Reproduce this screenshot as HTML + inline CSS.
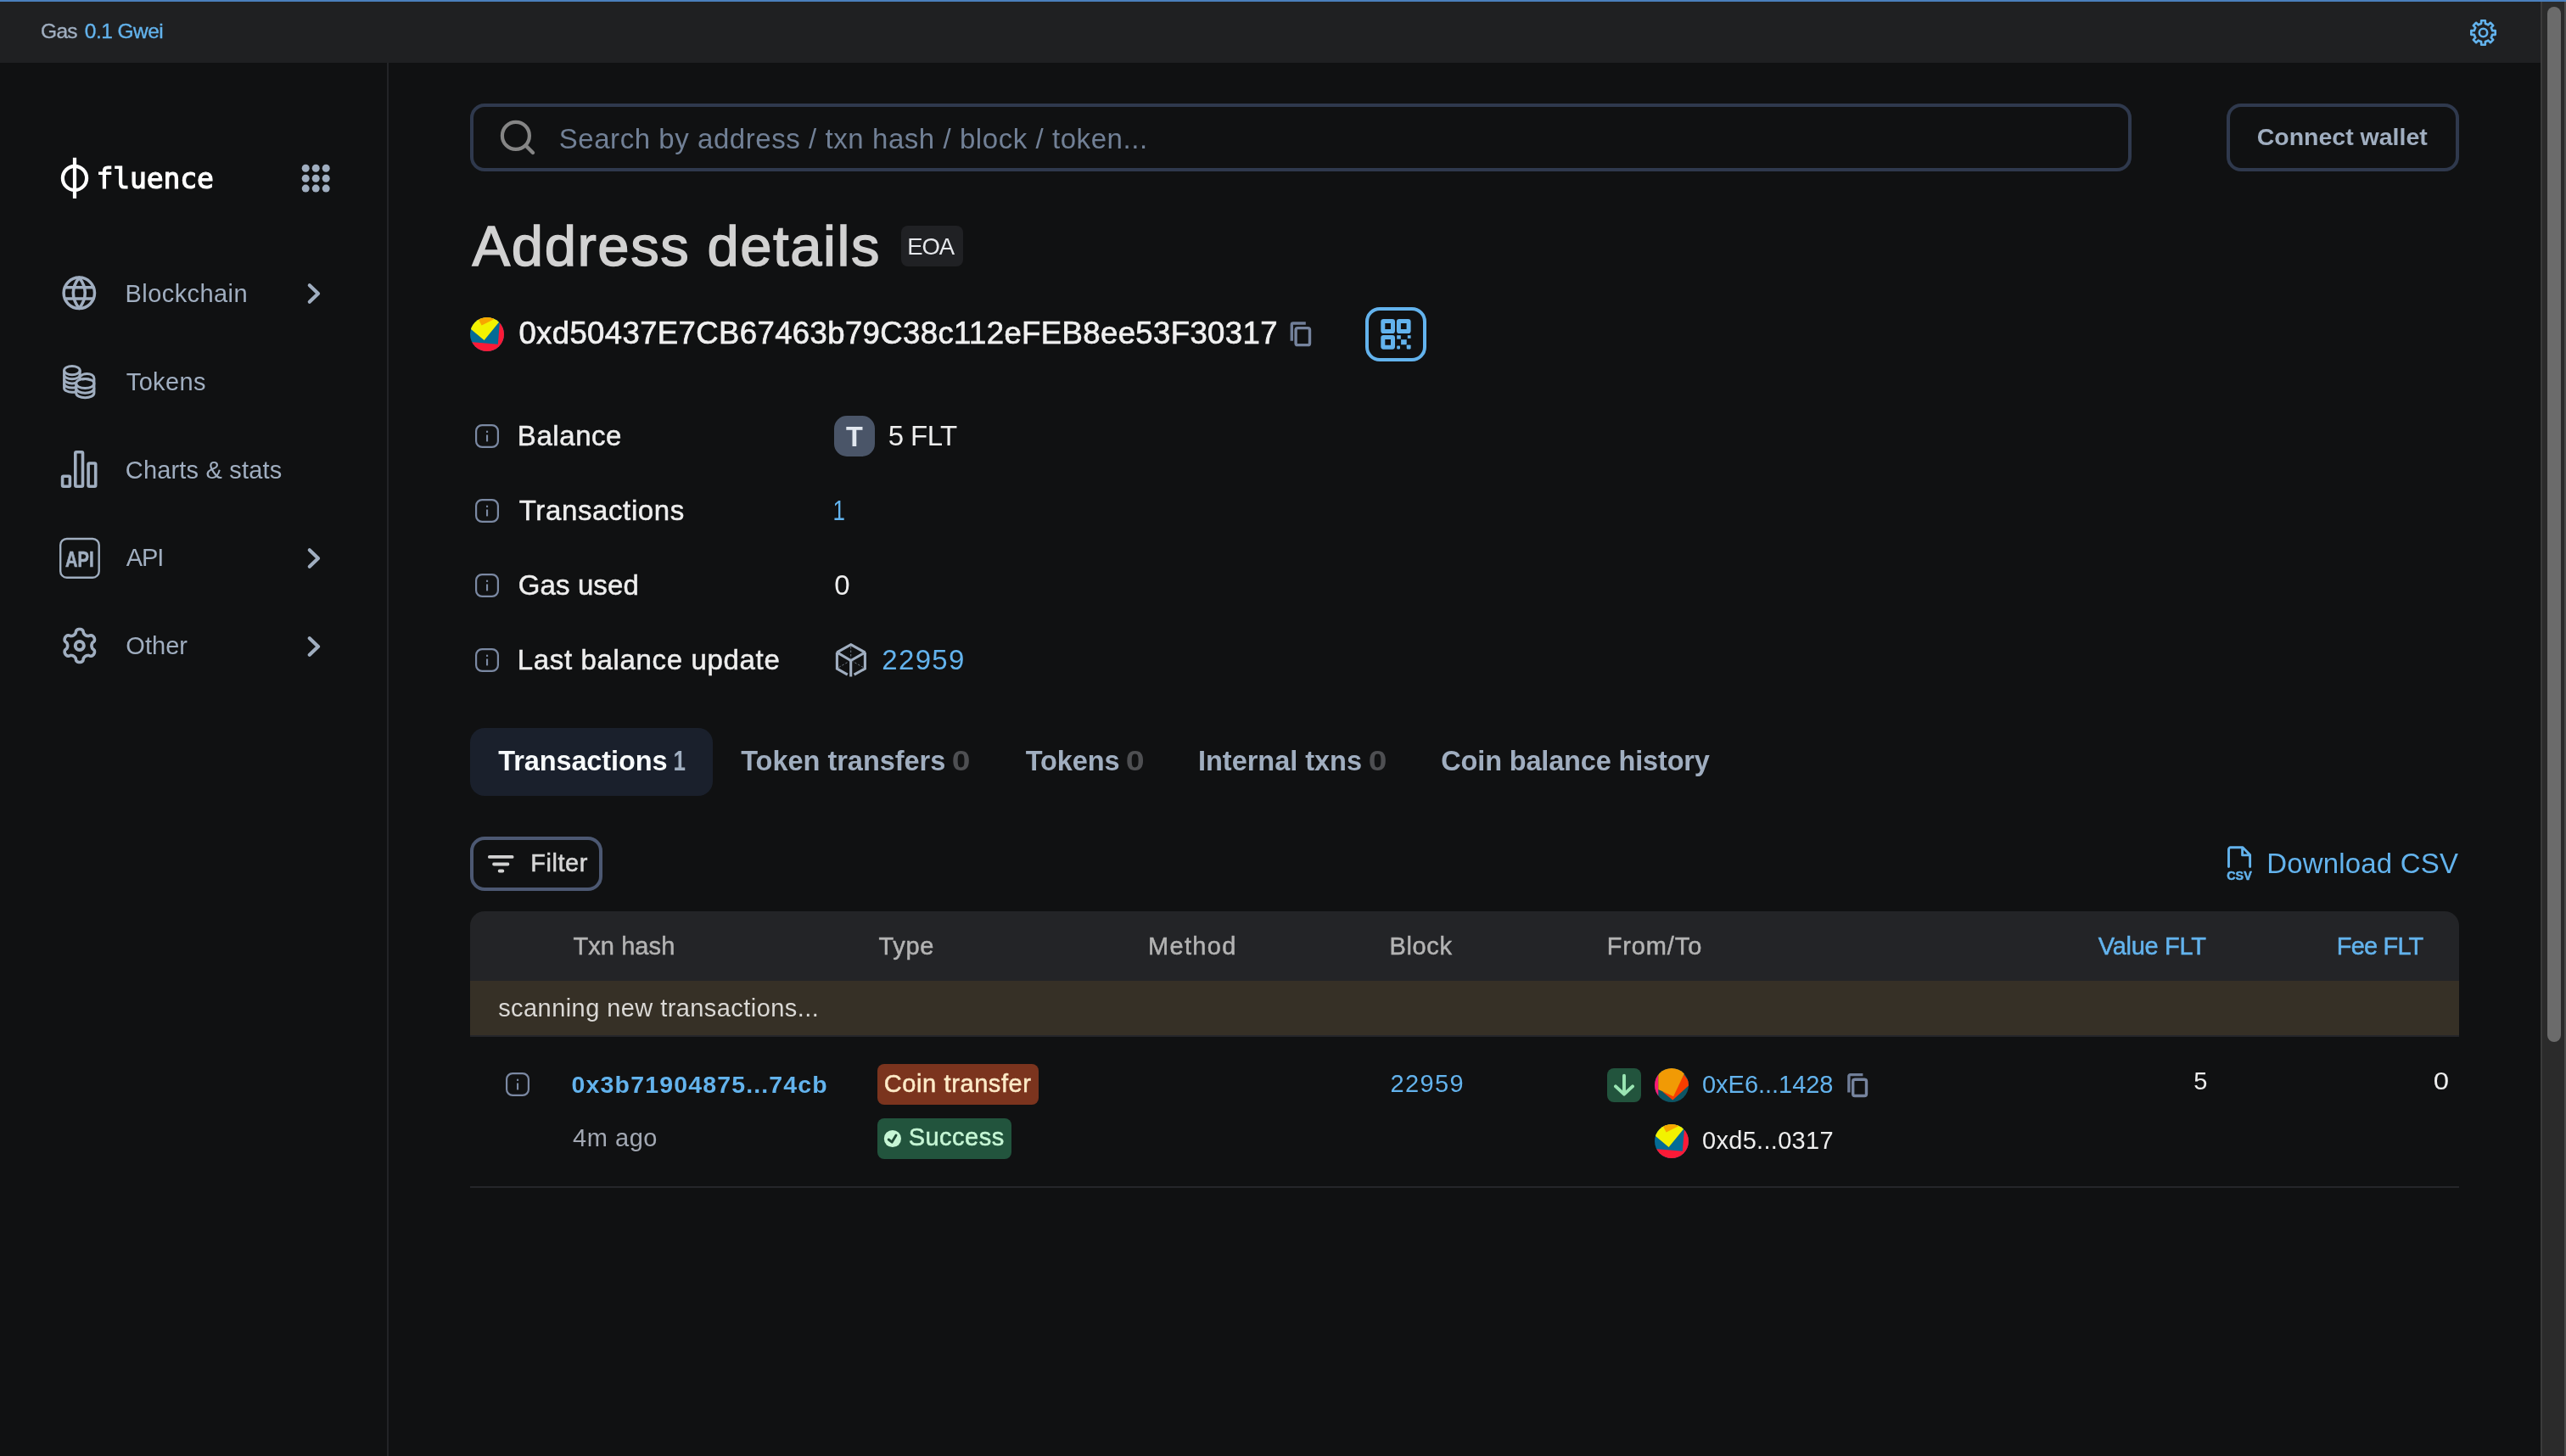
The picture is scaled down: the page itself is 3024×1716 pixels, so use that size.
<!DOCTYPE html>
<html lang="en">
<head>
<meta charset="utf-8">
<title>Address 0xd50437E7CB67463b79C38c112eFEB8ee53F30317 details - Fluence explorer</title>
<style>
*{box-sizing:border-box;margin:0;padding:0}
html,body{width:3024px;height:1716px;overflow:hidden;background:#101112}
body{font-family:"Liberation Sans",sans-serif;color:#eee;position:relative;font-size:32px;will-change:transform}
a{text-decoration:none}
h1{font-weight:400}
@media (max-width:1600px){html{zoom:.5}}
.abs{position:absolute;display:block}
.t{position:absolute;display:block;white-space:nowrap;line-height:1}
#loadbar{left:0;top:0;width:3024px;height:2px;background:#4a7fbd}
#topbar{left:0;top:2px;width:2994px;height:72px;background:#1f2022}
#sidebar{left:0;top:74px;width:458px;height:1642px;border-right:2px solid #232427}
#scroll{left:2994px;top:2px;width:30px;height:1714px;background:#2b2b2b;border-left:2px solid #3b3b3b;border-right:2px solid #4a4a4a}
#thumb{left:3002px;top:8px;width:16px;height:1220px;border-radius:8px;background:#6b6b6b}
#search{left:554px;top:122px;width:1958px;height:80px;border:4px solid #2f394d;border-radius:17px}
#connect{left:2624px;top:122px;width:274px;height:80px;border:4px solid #2f394d;border-radius:17px}
#eoabox{left:1062px;top:266px;width:73px;height:48px;border-radius:8px;background:#202124}
#qr{left:1609px;top:362px;width:72px;height:64px;border:4px solid #63b3ed;border-radius:17px}
#tokbox{left:983px;top:490px;width:48px;height:48px;border-radius:15px;background:#4a5568}
#tab1{left:554px;top:858px;width:286px;height:80px;border-radius:17px;background:#1a202c}
#filter{left:554px;top:986px;width:156px;height:64px;border:4px solid #4c5872;border-radius:17px}
#thead{left:554px;top:1074px;width:2344px;height:82px;background:#232427;border-radius:17px 17px 0 0}
#scanrow{left:554px;top:1156px;width:2344px;height:64px;background:#363026}
#rowtop{left:554px;top:1220px;width:2344px;height:2px;background:#25262a}
#rowbot{left:554px;top:1398px;width:2344px;height:2px;background:#25262a}
#ctbox{left:1034px;top:1254px;width:190px;height:48px;border-radius:8px;background:#7b341e}
#okbox{left:1034px;top:1318px;width:158px;height:48px;border-radius:8px;background:#22543d}
#arrbox{left:1894px;top:1259px;width:40px;height:40px;border-radius:8px;background:#22543d}
</style>
</head>
<body>
<div id="loadbar" class="abs"></div>
<header id="topbar" class="abs"></header>
<span class="t" id="gas-l" style="left:48.1px;top:25.2px;font-size:24.5px;color:#a0aec0;letter-spacing:-0.77px;-webkit-text-stroke:0.35px #a0aec0">Gas</span><a class="t" id="gas-v" style="left:99.8px;top:25.2px;font-size:24.5px;color:#63b3ed;letter-spacing:-0.53px;-webkit-text-stroke:0.35px #63b3ed">0.1 Gwei</a><svg class="abs" style="left:2908px;top:20px" width="38" height="38" viewBox="2908 20 38 38" ><path d="M2924.15 27.86L2924.15 24.29L2928.85 24.29L2928.85 27.86A10.9 10.9 0 0 1 2932.36 29.31L2934.88 26.79L2938.21 30.12L2935.69 32.64A10.9 10.9 0 0 1 2937.14 36.15L2940.71 36.15L2940.71 40.85L2937.14 40.85A10.9 10.9 0 0 1 2935.69 44.36L2938.21 46.88L2934.88 50.21L2932.36 47.69A10.9 10.9 0 0 1 2928.85 49.14L2928.85 52.71L2924.15 52.71L2924.15 49.14A10.9 10.9 0 0 1 2920.64 47.69L2918.12 50.21L2914.79 46.88L2917.31 44.36A10.9 10.9 0 0 1 2915.86 40.85L2912.29 40.85L2912.29 36.15L2915.86 36.15A10.9 10.9 0 0 1 2917.31 32.64L2914.79 30.12L2918.12 26.79L2920.64 29.31A10.9 10.9 0 0 1 2924.15 27.86Z" fill="none" stroke="#63b3ed" stroke-width="2.6" stroke-linejoin="round"/><circle cx="2926.5" cy="38.5" r="4.7" fill="none" stroke="#63b3ed" stroke-width="2.6"/></svg>
<aside id="sidebar" class="abs"></aside>
<svg class="abs" style="left:68px;top:184px" width="42" height="52" viewBox="68 184 42 52" ><circle cx="88" cy="209.900" r="14.100" fill="none" stroke="#fff" stroke-width="4.200"/><rect x="85.900" y="185.800" width="4.200" height="48.100" fill="#fff"/></svg><span class="t" id="logo" style="left:113.4px;top:194.4px;font-size:33px;color:#ffffff;letter-spacing:-0.10px;-webkit-text-stroke:1.2px #ffffff;font-family:'DejaVu Sans Mono','Liberation Mono',monospace">fluence</span><svg class="abs" style="left:354px;top:192px" width="36" height="36" viewBox="354 192 36 36" fill="#a0aec0"><circle cx="360.2" cy="198.3" r="4.5"/><circle cx="360.2" cy="210.2" r="4.5"/><circle cx="360.2" cy="222.1" r="4.5"/><circle cx="372.2" cy="198.3" r="4.5"/><circle cx="372.2" cy="210.2" r="4.5"/><circle cx="372.2" cy="222.1" r="4.5"/><circle cx="384.2" cy="198.3" r="4.5"/><circle cx="384.2" cy="210.2" r="4.5"/><circle cx="384.2" cy="222.1" r="4.5"/></svg>
<nav>
<svg class="abs" style="left:72px;top:324px" width="44" height="44" viewBox="72 324 44 44" ><g fill="none" stroke="#a0aec0" stroke-width="3.5"><circle cx="93.3" cy="345.3" r="18.2"/><path d="M93.3 327.1Q79.300 345.3 93.3 363.5Q107.300 345.3 93.3 327.1Z" stroke-linejoin="round"/><path d="M76.5 338.7H110.100M76.5 351.9H110.100"/></g></svg><span class="t" id="n1" style="left:147.6px;top:331.6px;font-size:29px;color:#a0aec0;letter-spacing:0.42px">Blockchain</span><svg class="abs" style="left:358px;top:330px" width="24" height="32" viewBox="358 330 24 32" ><path d="M364.8 336.2L375 346L364.8 355.8" fill="none" stroke="#a0aec0" stroke-width="4.2" stroke-linecap="round" stroke-linejoin="round"/></svg><svg class="abs" style="left:72px;top:428px" width="44" height="44" viewBox="72 428 44 44" ><g fill="none" stroke="#a0aec0" stroke-width="3"><path d="M95.2 443.4C96.5 441.4 99.5 440.400 102.600 440.400C107.300 440.400 110.900 442.800 110.900 446V452"/><path d="M96.4 447.2C99 446.300 104 446.300 107.300 448.200"/><ellipse cx="84.9" cy="436.600" rx="9.300" ry="5.100"/><path d="M75.6 436.600V457.200C75.6 460 79.700 462.300 84.900 462.300C86.500 462.300 88 462.100 89.300 461.700M94.200 436.600V447"/><path d="M75.6 441.700C75.6 444.500 79.700 446.800 84.900 446.800C90 446.800 94.200 444.500 94.200 441.700M75.6 446.800C75.6 449.600 79.700 451.900 84.900 451.900C86.500 451.900 88 451.700 89.300 451.300M75.6 452C75.6 454.800 79.700 457.100 84.900 457.100C86.500 457.100 88 456.900 89.300 456.500"/><ellipse cx="100.300" cy="452" rx="10.600" ry="5.600"/><path d="M89.700 452V463.200C89.700 466.300 94.400 468.800 100.300 468.800C106.200 468.800 110.900 466.300 110.900 463.200V452"/><path d="M89.700 457.600C89.700 460.700 94.400 463.200 100.300 463.200C106.200 463.200 110.900 460.700 110.900 457.600"/></g></svg><span class="t" id="n2" style="left:148.8px;top:435.7px;font-size:29px;color:#a0aec0;letter-spacing:0.34px">Tokens</span><svg class="abs" style="left:70px;top:528px" width="48" height="50" viewBox="70 528 48 50" ><g fill="none" stroke="#a0aec0" stroke-width="3.6" stroke-linejoin="round"><rect x="73.600" y="561.300" width="8.800" height="11.900" rx="1.2"/><rect x="88.800" y="532.800" width="8.700" height="40.400" rx="1.2"/><rect x="104.100" y="546" width="8.600" height="27.200" rx="1.2"/></g></svg><span class="t" id="n3" style="left:147.8px;top:539.5px;font-size:29px;color:#a0aec0;letter-spacing:0.18px">Charts &amp; stats</span><svg class="abs" style="left:68px;top:632px" width="52" height="52" viewBox="68 632 52 52" ><rect x="71.200" y="635" width="45.500" height="45.700" rx="7.5" fill="none" stroke="#a0aec0" stroke-width="2.4"/><text x="93.750" y="668.400" font-family="Liberation Sans,sans-serif" font-weight="700" font-size="26.500" text-anchor="middle" textLength="33.5" lengthAdjust="spacingAndGlyphs" fill="#a0aec0" stroke="#a0aec0" stroke-width="0.6">API</text></svg><span class="t" id="n4" style="left:148.8px;top:643.4px;font-size:29px;color:#a0aec0;letter-spacing:-1.09px">API</span><svg class="abs" style="left:358px;top:642px" width="24" height="32" viewBox="358 642 24 32" ><path d="M364.8 648.2L375 658L364.8 667.8" fill="none" stroke="#a0aec0" stroke-width="4.2" stroke-linecap="round" stroke-linejoin="round"/></svg><svg class="abs" style="left:70px;top:738px" width="48" height="48" viewBox="70 738 48 48" ><path d="M107.95 761.00 L107.98 760.38 L108.08 759.75 L108.25 759.10 L108.51 758.41 L108.91 757.65 L110.08 756.64 L111.18 755.52 L111.43 754.58 L111.46 753.68 L111.35 752.82 L111.10 751.99 L110.73 751.23 L110.25 750.52 L109.66 749.89 L108.97 749.36 L108.17 748.94 L107.24 748.69 L105.71 749.09 L104.26 749.59 L103.40 749.55 L102.68 749.43 L102.02 749.26 L101.43 749.03 L100.88 748.75 L100.36 748.41 L99.86 748.01 L99.38 747.53 L98.91 746.96 L98.45 746.24 L98.16 744.72 L97.74 743.21 L97.06 742.53 L96.30 742.04 L95.49 741.71 L94.65 741.51 L93.80 741.45 L92.95 741.51 L92.11 741.71 L91.30 742.04 L90.54 742.53 L89.86 743.21 L89.44 744.72 L89.15 746.24 L88.69 746.96 L88.22 747.53 L87.74 748.01 L87.24 748.41 L86.72 748.75 L86.17 749.03 L85.58 749.26 L84.92 749.43 L84.20 749.55 L83.34 749.59 L81.89 749.09 L80.36 748.69 L79.43 748.94 L78.63 749.36 L77.94 749.89 L77.35 750.52 L76.87 751.23 L76.50 751.99 L76.25 752.82 L76.14 753.68 L76.17 754.58 L76.42 755.52 L77.52 756.64 L78.69 757.65 L79.09 758.41 L79.35 759.10 L79.52 759.75 L79.62 760.38 L79.65 761.00 L79.62 761.62 L79.52 762.25 L79.35 762.90 L79.09 763.59 L78.69 764.35 L77.52 765.36 L76.42 766.48 L76.17 767.42 L76.14 768.32 L76.25 769.18 L76.50 770.01 L76.87 770.77 L77.35 771.48 L77.94 772.11 L78.63 772.64 L79.43 773.06 L80.36 773.31 L81.89 772.91 L83.34 772.41 L84.20 772.45 L84.92 772.57 L85.58 772.74 L86.17 772.97 L86.72 773.25 L87.24 773.59 L87.74 773.99 L88.22 774.47 L88.69 775.04 L89.15 775.76 L89.44 777.28 L89.86 778.79 L90.54 779.47 L91.30 779.96 L92.11 780.29 L92.95 780.49 L93.80 780.55 L94.65 780.49 L95.49 780.29 L96.30 779.96 L97.06 779.47 L97.74 778.79 L98.16 777.28 L98.45 775.76 L98.91 775.04 L99.38 774.47 L99.86 773.99 L100.36 773.59 L100.87 773.25 L101.43 772.97 L102.02 772.74 L102.68 772.57 L103.40 772.45 L104.26 772.41 L105.71 772.91 L107.24 773.31 L108.17 773.06 L108.97 772.64 L109.66 772.11 L110.25 771.48 L110.73 770.77 L111.10 770.01 L111.35 769.18 L111.46 768.32 L111.43 767.42 L111.18 766.48 L110.08 765.36 L108.91 764.35 L108.51 763.59 L108.25 762.90 L108.08 762.25 L107.98 761.62Z" fill="none" stroke="#a0aec0" stroke-width="3.6" stroke-linejoin="round"/><circle cx="93.8" cy="761" r="5" fill="none" stroke="#a0aec0" stroke-width="4"/></svg><span class="t" id="n5" style="left:148.3px;top:747.4px;font-size:29px;color:#a0aec0;letter-spacing:0.03px">Other</span><svg class="abs" style="left:358px;top:746px" width="24" height="32" viewBox="358 746 24 32" ><path d="M364.8 752.2L375 762L364.8 771.8" fill="none" stroke="#a0aec0" stroke-width="4.2" stroke-linecap="round" stroke-linejoin="round"/></svg>
</nav>

<main>
<div id="search" class="abs"></div>
<svg class="abs" style="left:586px;top:138px" width="48" height="48" viewBox="586 138 48 48" ><circle cx="607.900" cy="159.900" r="16" fill="none" stroke="#858585" stroke-width="4.2"/><path d="M619.500 171.500L628 180" stroke="#858585" stroke-width="4.4" stroke-linecap="round"/></svg><span class="t" id="ph" style="left:658.7px;top:146.5px;font-size:33px;color:#718096;letter-spacing:0.56px">Search by address / txn hash / block / token...</span>
<div id="connect" class="abs"></div>
<span class="t" id="cw" style="left:2659.7px;top:147.0px;font-size:28.5px;color:#a0aec0;font-weight:700">Connect wallet</span>
<h1 class="t" id="title" style="left:556.6px;top:255.6px;font-size:67px;color:#d2d2d2;letter-spacing:1.56px;-webkit-text-stroke:1.4px #d2d2d2">Address details</h1>
<div id="eoabox" class="abs"></div><span class="t" id="eoa" style="left:1069.2px;top:276.6px;font-size:27.5px;color:#e6e8ec;letter-spacing:-1.12px">EOA</span>
<svg class="abs" style="left:554px;top:374px" width="40" height="40" viewBox="0 0 40 40"><defs><clipPath id="ic1"><circle cx="20" cy="20" r="20"/></clipPath></defs><g clip-path="url(#ic1)"><rect width="40" height="40" fill="#046b96"/><path d="M-2 28.9L3 29.3L32.8 31.8L34.9 6.100L36 -2H42V42H-2z" fill="#fb1a37"/><path d="M-2 -2H34.6L34 5.700L16.600 27L1.300 14.200L-2 12z" fill="#f2f200"/><path d="M10.200 3.100L13.600 9.500L28.100 2.300L28 -2H9z" fill="#f7a600"/></g></svg><span class="t" id="addr" style="left:611.4px;top:375.3px;font-size:36.5px;color:#f0f0f0;letter-spacing:0.39px;-webkit-text-stroke:0.7px #f0f0f0">0xd50437E7CB67463b79C38c112eFEB8ee53F30317</span><svg class="abs" style="left:1520px;top:379px" width="27" height="31" viewBox="1520 379 27 31" ><path d="M1522.3 401.8V382.7a1.7 1.7 0 0 1 1.7 -1.7H1538.8" fill="none" stroke="#707e98" stroke-width="3.4"/><rect x="1527.1" y="386.6" width="16.4" height="20.0" rx="2.2" fill="none" stroke="#76849e" stroke-width="3.4"/></svg>
<div id="qr" class="abs"></div>
<svg class="abs" style="left:1626px;top:375px" width="38" height="38" viewBox="1626 375 38 38" ><g fill="none" stroke="#63b3ed" stroke-width="5" stroke-linejoin="round"><rect x="1629.800" y="378.500" width="11.700" height="12" rx="0.6"/><rect x="1648.400" y="378.500" width="11.700" height="12" rx="0.6"/><rect x="1629.800" y="397.400" width="11.700" height="11.800" rx="0.6"/></g><g fill="#63b3ed"><rect x="1646.200" y="395.200" width="4.600" height="4.400"/><rect x="1658.800" y="395.200" width="3.800" height="3.600"/><rect x="1651.100" y="400.200" width="6.600" height="6"/><rect x="1646.200" y="407.600" width="3.800" height="3.800" rx="0.8"/><rect x="1657.700" y="406.500" width="4.900" height="4.900" rx="0.8"/></g></svg>
<svg class="abs" style="left:560px;top:500px" width="28" height="28" viewBox="560 500 28 28" ><rect x="561.1" y="501.1" width="25.8" height="25.8" rx="7" fill="none" stroke="#7b89a3" stroke-width="2.2"/><rect x="573" y="507.7" width="2.1" height="2.2" fill="#7b89a3"/><rect x="573" y="512.5" width="2.1" height="7.9" fill="#7b89a3"/></svg><span class="t" id="l1" style="left:609.8px;top:497.3px;font-size:33px;color:#eeeeee;letter-spacing:0.57px;-webkit-text-stroke:0.5px #eeeeee">Balance</span>
<svg class="abs" style="left:560px;top:588px" width="28" height="28" viewBox="560 588 28 28" ><rect x="561.1" y="589.1" width="25.8" height="25.8" rx="7" fill="none" stroke="#7b89a3" stroke-width="2.2"/><rect x="573" y="595.7" width="2.1" height="2.2" fill="#7b89a3"/><rect x="573" y="600.5" width="2.1" height="7.9" fill="#7b89a3"/></svg><span class="t" id="l2" style="left:611.8px;top:585.4px;font-size:33px;color:#eeeeee;letter-spacing:0.62px;-webkit-text-stroke:0.5px #eeeeee">Transactions</span>
<svg class="abs" style="left:560px;top:676px" width="28" height="28" viewBox="560 676 28 28" ><rect x="561.1" y="677.1" width="25.8" height="25.8" rx="7" fill="none" stroke="#7b89a3" stroke-width="2.2"/><rect x="573" y="683.7" width="2.1" height="2.2" fill="#7b89a3"/><rect x="573" y="688.5" width="2.1" height="7.9" fill="#7b89a3"/></svg><span class="t" id="l3" style="left:610.8px;top:673.4px;font-size:33px;color:#eeeeee;letter-spacing:0.10px;-webkit-text-stroke:0.5px #eeeeee">Gas used</span>
<svg class="abs" style="left:560px;top:764px" width="28" height="28" viewBox="560 764 28 28" ><rect x="561.1" y="765.1" width="25.8" height="25.8" rx="7" fill="none" stroke="#7b89a3" stroke-width="2.2"/><rect x="573" y="771.7" width="2.1" height="2.2" fill="#7b89a3"/><rect x="573" y="776.5" width="2.1" height="7.9" fill="#7b89a3"/></svg><span class="t" id="l4" style="left:609.8px;top:761.4px;font-size:33px;color:#eeeeee;letter-spacing:0.65px;-webkit-text-stroke:0.5px #eeeeee">Last balance update</span>
<div id="tokbox" class="abs"></div><span class="t" id="tk" style="left:997.0px;top:497.1px;font-size:34px;color:#e2e8f0;font-weight:700;transform:scaleX(0.952);transform-origin:0.0px 50%">T</span><span class="t" id="v1" style="left:1046.8px;top:497.3px;font-size:33px;color:#eeeeee;letter-spacing:-0.60px">5 FLT</span><a class="t" id="v2" style="left:981.0px;top:585.4px;font-size:33px;color:#63b3ed;transform:scaleX(0.787);transform-origin:2.0px 50%">1</a><span class="t" id="v3" style="left:983.2px;top:673.4px;font-size:33px;color:#eeeeee">0</span><svg class="abs" style="left:982px;top:756px" width="42" height="44" viewBox="982 756 42 44" ><g fill="none" stroke="#a0aec0" stroke-width="3.1" stroke-linejoin="miter" stroke-miterlimit="1.5"><path d="M1002.700 759.700L1019.400 768.900L1002.700 778.500L986.400 768.900Z"/><path d="M986.400 768.900V788L998.800 795.200M1019.400 768.900V788L1006.600 795.200M1002.700 778.500V797.400"/></g><g stroke="#a0aec0" stroke-width="0.9" stroke-dasharray="2.500 2" opacity="0.75" fill="none"><path d="M1002.700 762V776M988.500 786.500L1000.500 779.600M1017.300 786.500L1005 779.600"/></g></svg><a class="t" id="v4" style="left:1039.3px;top:761.4px;font-size:33px;color:#63b3ed;letter-spacing:1.32px">22959</a>
<div id="tab1" class="abs"></div><span class="t" id="t1" style="left:587.2px;top:881.0px;font-size:32.5px;color:#f7fafc;font-weight:700;letter-spacing:-0.10px">Transactions</span><span class="t" id="t1c" style="left:792.9px;top:881.0px;font-size:32.5px;color:#a0aec0;font-weight:700;transform:scaleX(0.800);transform-origin:2.0px 50%">1</span><span class="t" id="t2" style="left:873.2px;top:881.0px;font-size:32.5px;color:#a0aec0;font-weight:700;letter-spacing:-0.02px">Token transfers</span><span class="t" id="t2c" style="left:1122.4px;top:881.0px;font-size:32.5px;color:#4e4f52;font-weight:700;transform:scaleX(1.200);transform-origin:1.0px 50%">0</span><span class="t" id="t3" style="left:1208.7px;top:881.0px;font-size:32.5px;color:#a0aec0;font-weight:700;letter-spacing:-0.08px">Tokens</span><span class="t" id="t3c" style="left:1327.0px;top:881.0px;font-size:32.5px;color:#4e4f52;font-weight:700;transform:scaleX(1.213);transform-origin:1.0px 50%">0</span><span class="t" id="t4" style="left:1412.0px;top:881.0px;font-size:32.5px;color:#a0aec0;font-weight:700;letter-spacing:-0.02px">Internal txns</span><span class="t" id="t4c" style="left:1612.9px;top:881.0px;font-size:32.5px;color:#4e4f52;font-weight:700;transform:scaleX(1.200);transform-origin:1.0px 50%">0</span><span class="t" id="t5" style="left:1698.3px;top:881.0px;font-size:32.5px;color:#a0aec0;font-weight:700;letter-spacing:-0.16px">Coin balance history</span>
<div id="filter" class="abs"></div>
<svg class="abs" style="left:572px;top:1004px" width="36" height="28" viewBox="572 1004 36 28" ><g stroke="#d2d2d2" stroke-width="3.900" stroke-linecap="round"><path d="M576.900 1009.900H603.600M582.100 1018.500H598.400M588.700 1026.500H592.300"/></g></svg><span class="t" id="ftxt" style="left:625.2px;top:1002.5px;font-size:29px;color:#d6d6d6;letter-spacing:0.56px;-webkit-text-stroke:0.5px #d6d6d6">Filter</span><svg class="abs" style="left:2622px;top:996px" width="34" height="44" viewBox="2622 996 34 44" ><path d="M2626.500 1021.600V1001a2.200 2.200 0 0 1 2.200 -2.200H2643L2651.600 1007.600V1021.600M2642.600 999V1007.900H2651.400" fill="none" stroke="#63b3ed" stroke-width="2.9" stroke-linejoin="round" stroke-linecap="round"/><text x="2639" y="1036.800" font-family="Liberation Sans,sans-serif" font-weight="700" font-size="14" text-anchor="middle" textLength="29.4" lengthAdjust="spacingAndGlyphs" fill="#63b3ed" stroke="#63b3ed" stroke-width="0.5">CSV</text></svg><span class="t" id="dl" style="left:2671.2px;top:1001.1px;font-size:33px;color:#63b3ed;letter-spacing:0.18px">Download CSV</span>
<div id="thead" class="abs"></div>
<span class="t" id="h1" style="left:675.4px;top:1100.8px;font-size:29px;color:#b3b3b3;letter-spacing:0.09px;-webkit-text-stroke:0.5px #b3b3b3">Txn hash</span><span class="t" id="h2" style="left:1035.5px;top:1100.8px;font-size:29px;color:#b3b3b3;letter-spacing:0.69px;-webkit-text-stroke:0.5px #b3b3b3">Type</span><span class="t" id="h3" style="left:1353.0px;top:1100.8px;font-size:29px;color:#b3b3b3;letter-spacing:1.32px;-webkit-text-stroke:0.5px #b3b3b3">Method</span><span class="t" id="h4" style="left:1637.5px;top:1100.8px;font-size:29px;color:#b3b3b3;letter-spacing:0.65px;-webkit-text-stroke:0.5px #b3b3b3">Block</span><span class="t" id="h5" style="left:1893.7px;top:1100.8px;font-size:29px;color:#b3b3b3;letter-spacing:0.88px;-webkit-text-stroke:0.5px #b3b3b3">From/To</span><span class="t" id="h6" style="left:2472.8px;top:1100.8px;font-size:29px;color:#63b3ed;letter-spacing:-0.30px;-webkit-text-stroke:0.5px #63b3ed">Value FLT</span><span class="t" id="h7" style="left:2753.8px;top:1100.8px;font-size:29px;color:#63b3ed;letter-spacing:-0.82px;-webkit-text-stroke:0.5px #63b3ed">Fee FLT</span>
<div id="scanrow" class="abs"></div><span class="t" id="scan" style="left:587.2px;top:1173.5px;font-size:29px;color:#dad8d5;letter-spacing:0.43px">scanning new transactions...</span>
<div id="rowtop" class="abs"></div>
<svg class="abs" style="left:596px;top:1264px" width="28" height="28" viewBox="596 1264 28 28" ><rect x="597.1" y="1265.1" width="25.8" height="25.8" rx="7" fill="none" stroke="#7b89a3" stroke-width="2.2"/><rect x="609" y="1271.7" width="2.1" height="2.2" fill="#7b89a3"/><rect x="609" y="1276.5" width="2.1" height="7.9" fill="#7b89a3"/></svg><a class="t" id="hash" style="left:673.6px;top:1263.7px;font-size:28.5px;color:#63b3ed;font-weight:700;letter-spacing:1.15px">0x3b71904875...74cb</a><span class="t" id="ago" style="left:675.1px;top:1326.9px;font-size:29px;color:#a2a8b3;letter-spacing:0.52px">4m ago</span>
<div id="ctbox" class="abs"></div><span class="t" id="ct" style="left:1041.8px;top:1263.3px;font-size:29px;color:#feebc8;letter-spacing:0.60px;-webkit-text-stroke:0.5px #feebc8">Coin transfer</span>
<div id="okbox" class="abs"></div><svg class="abs" style="left:1041px;top:1331px" width="22" height="22" viewBox="1041 1331 22 22" ><circle cx="1051.900" cy="1342" r="10.100" fill="#c6f6d5"/><path d="M1047.200 1343L1051.200 1346.100L1056 1337.900" fill="none" stroke="#1f4a36" stroke-width="2.900" stroke-linecap="round" stroke-linejoin="round"/></svg><span class="t" id="ok" style="left:1070.7px;top:1326.4px;font-size:29px;color:#c6f6d5;letter-spacing:0.48px;-webkit-text-stroke:0.5px #c6f6d5">Success</span>
<a class="t" id="blk" style="left:1638.4px;top:1263.3px;font-size:29px;color:#63b3ed;letter-spacing:1.42px">22959</a>
<div id="arrbox" class="abs"></div><svg class="abs" style="left:1894px;top:1259px" width="40" height="40" viewBox="1894 1259 40 40" ><path d="M1914 1267.800V1288.500M1904 1280.400L1914 1289.600L1924 1280.400" fill="none" stroke="#9ae6b4" stroke-width="3.900" stroke-linecap="round" stroke-linejoin="round"/></svg><svg class="abs" style="left:1950px;top:1259px" width="40" height="40" viewBox="0 0 40 40"><defs><clipPath id="ic2"><circle cx="20" cy="20" r="20"/></clipPath></defs><g clip-path="url(#ic2)"><rect width="40" height="40" fill="#0d5564"/><path d="M-2 -2H4.300V33H-2z" fill="#fb1a74"/><path d="M34.500 7.200L42 18L41 19.500L21.300 37.400L9 27.500L22 30z" fill="#f73d00"/><path d="M4.300 -2H38L34.500 7.200L22.100 33.200L4.300 25.100z" fill="#f19a05"/></g></svg><a class="t" id="a1" style="left:2006.0px;top:1264.0px;font-size:29px;color:#63b3ed;letter-spacing:-0.03px">0xE6...1428</a><svg class="abs" style="left:2177px;top:1264px" width="26" height="31" viewBox="2177 1264 26 31" ><path d="M2178.9 1287.4V1268.3a1.7 1.7 0 0 1 1.7 -1.7H2195.4" fill="none" stroke="#707e98" stroke-width="3.4"/><rect x="2183.7" y="1272.2" width="15.8" height="19.3" rx="2.2" fill="none" stroke="#76849e" stroke-width="3.4"/></svg>
<svg class="abs" style="left:1950px;top:1325px" width="40" height="40" viewBox="0 0 40 40"><defs><clipPath id="ic3"><circle cx="20" cy="20" r="20"/></clipPath></defs><g clip-path="url(#ic3)"><rect width="40" height="40" fill="#046b96"/><path d="M-2 28.9L3 29.3L32.8 31.8L34.9 6.100L36 -2H42V42H-2z" fill="#fb1a37"/><path d="M-2 -2H34.6L34 5.700L16.600 27L1.300 14.200L-2 12z" fill="#f2f200"/><path d="M10.200 3.100L13.600 9.500L28.100 2.300L28 -2H9z" fill="#f7a600"/></g></svg><span class="t" id="a2" style="left:2006.0px;top:1330.4px;font-size:29px;color:#eeeeee;letter-spacing:0.30px">0xd5...0317</span>
<span class="t" id="val" style="left:2585.2px;top:1260.4px;font-size:29px;color:#eeeeee">5</span><span class="t" id="fee" style="left:2868.1px;top:1260.4px;font-size:29px;color:#eeeeee;transform:scaleX(1.136);transform-origin:1.0px 50%">0</span>
<div id="rowbot" class="abs"></div>
</main>
<div id="scroll" class="abs"></div>
<div id="thumb" class="abs"></div>
</body>
</html>
